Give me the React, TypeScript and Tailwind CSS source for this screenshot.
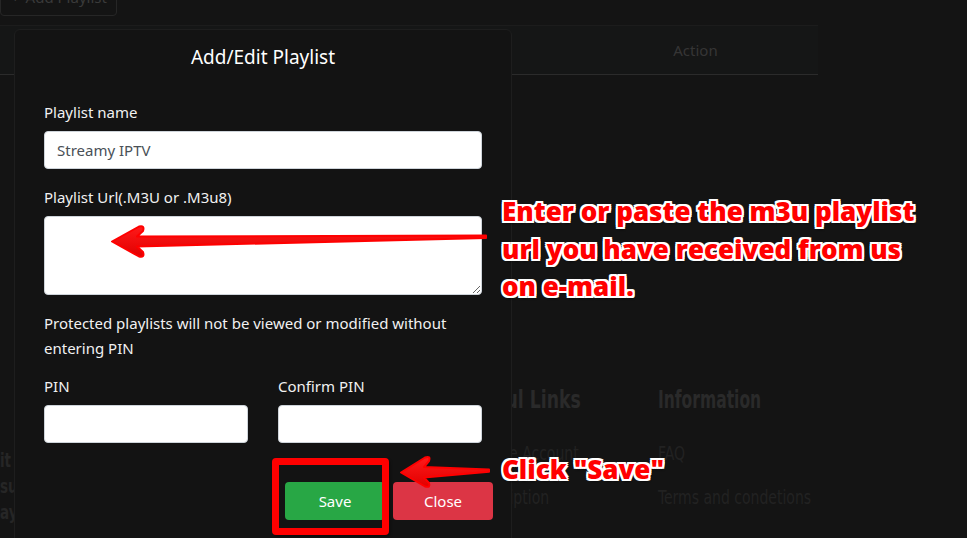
import React from 'react';

const uiFont = "font-['Noto_Sans',_'Open_Sans',_sans-serif]";

const Field = ({ label, children }: { label: string; children: React.ReactNode }) => (
  <div className="flex flex-col">
    <label className="h-[24px] leading-[24px] text-[15px] text-[#f1f1f1] mb-[7px]">{label}</label>
    {children}
  </div>
);

const inputCls =
  'h-[38px] w-full rounded-[4px] border border-[#ced4da] bg-white px-3 text-[15px] text-[#495057] outline-none';

const Background = () => (
  <div className="flex flex-col">
    <div className="h-[25px] overflow-hidden">
      <div className="mt-[-21px] flex h-[37px] w-[117px] items-center gap-[6px] whitespace-nowrap rounded-[4px] border border-[#262626] px-[10px] text-[15px] text-[#3a3a3a]">
        <span>+</span>
        <span>Add Playlist</span>
      </div>
    </div>
    <div className="flex h-[50px] w-[818px] border-t border-b border-t-[#1c1c1c] border-b-[#2b2b2b] bg-[#151616]">
      <div className="w-[573px]" />
      <div className="flex flex-1 items-center justify-center text-[15px] text-[#353535]">Action</div>
    </div>

    <div className="mt-[310px] flex font-['Liberation_Sans_Narrow',_'DejaVu_Sans_Condensed',_sans-serif]">
      <div className="flex w-[462px] flex-col pt-[62px] text-[20px] font-bold leading-[26px] text-[#262626]">
        <span className="origin-left scale-x-[0.75]">it</span>
        <span className="origin-left scale-x-[0.75]">su</span>
        <span className="origin-left scale-x-[0.75]">ay</span>
      </div>
      <div className="flex w-[196px] flex-col">
        <h4 className="h-[30px] origin-left scale-x-[0.8] text-[24px] font-bold leading-[30px] text-[#2a2a2a]">Useful Links</h4>
        <ul className="mt-[26px] flex flex-col gap-[20px] text-[19px] leading-[24px] text-[#222]">
          <li className="origin-left scale-x-[0.82]">Manage Account</li>
          <li className="origin-left scale-x-[0.82]">Subscription</li>
        </ul>
      </div>
      <div className="flex flex-col">
        <h4 className="h-[30px] origin-left scale-x-[0.72] text-[24px] font-bold leading-[30px] text-[#2a2a2a]">Information</h4>
        <ul className="mt-[26px] flex flex-col gap-[20px] text-[19px] leading-[24px] text-[#222]">
          <li className="origin-left scale-x-[0.82]">FAQ</li>
          <li className="origin-left scale-x-[0.82]">Terms and condetions</li>
        </ul>
      </div>
    </div>
  </div>
);

const Modal = () => (
  <div
    className={`absolute left-[14px] top-[29px] bottom-[-20px] w-[498px] rounded-t-[6px] border border-[#1e1e1e] bg-[#131313] ${uiFont}`}
  >
    <div className="flex h-[54px] items-center justify-center text-[19px] text-white">Add/Edit Playlist</div>
    <div className="flex flex-col px-[29px] pt-[16px]">
      <Field label="Playlist name">
        <input className={inputCls} defaultValue="Streamy IPTV" />
      </Field>
      <div className="mt-[16px]">
        <Field label="Playlist Url(.M3U or .M3u8)">
          <textarea className="h-[79px] w-full rounded-[4px] border border-[#ced4da] bg-white px-3 py-2 text-[15px] text-[#495057] outline-none" />
        </Field>
      </div>
      <p className="mt-[16px] text-[15px] leading-[25px] text-[#f1f1f1]">
        Protected playlists will not be viewed or modified without entering PIN
      </p>
      <div className="mt-[13px] grid grid-cols-2 gap-[30px]">
        <Field label="PIN">
          <input className={inputCls} type="password" />
        </Field>
        <Field label="Confirm PIN">
          <input className={inputCls} type="password" />
        </Field>
      </div>
    </div>
    <div className="mt-[39px] flex justify-end gap-[8px] pr-[18px]">
      <button className="h-[38px] w-[100px] rounded-[4px] bg-[#28a745] text-[15px] text-white">Save</button>
      <button className="h-[38px] w-[100px] rounded-[4px] bg-[#dc3545] text-[15px] text-white">Close</button>
    </div>
  </div>
);

const callout =
  "font-['Open_Sans',_'Noto_Sans',_sans-serif] font-extrabold text-[#ff0000] [text-shadow:2px_0_0_#fff,-2px_0_0_#fff,0_2px_0_#fff,0_-2px_0_#fff,2px_2px_0_#fff,-2px_-2px_0_#fff,2px_-2px_0_#fff,-2px_2px_0_#fff,1px_3px_2px_rgba(0,0,0,0.5)]";

const Annotations = () => (
  <>
    <svg className="pointer-events-none absolute inset-0" width="967" height="538" viewBox="0 0 967 538">
      <defs>
        <linearGradient id="arrowShade" x1="0" y1="0" x2="0" y2="1">
          <stop offset="0" stopColor="#ff1a1a" />
          <stop offset="1" stopColor="#e00000" />
        </linearGradient>
      </defs>
      <path
        d="M112,241.5 L139,226.5 Q145,225 143,231 L137,236.5 L486,235.5 L486,238 L137,246.5 L143,252 Q145,258 139,256.5 Z"
        fill="url(#arrowShade)"
        stroke="#f00"
        strokeWidth="2"
        strokeLinejoin="round"
      />
      <path
        d="M401,472.5 L425,457.5 Q431,455.5 429,461 L424,467 L489,469.5 L489,471.8 L424,477.5 L429,483 Q431,488 425,486.5 Z"
        fill="url(#arrowShade)"
        stroke="#f00"
        strokeWidth="2"
        strokeLinejoin="round"
      />
    </svg>
    <div className="absolute left-[272px] top-[458px] h-[77px] w-[117px] rounded-[4px] border-[7px] border-[#ff0000] shadow-[1px_2px_3px_rgba(0,0,0,0.4)]" />
    <div className={`absolute left-[502px] top-[193px] text-[26px] leading-[37.5px] ${callout}`}>
      <div>Enter or paste the m3u playlist</div>
      <div>url you have received from us</div>
      <div>on e-mail.</div>
    </div>
    <div className={`absolute left-[502px] top-[451px] text-[26px] leading-[37.5px] ${callout}`}>Click "Save"</div>
  </>
);

export default function App() {
  return (
    <div className={`relative h-[538px] w-[967px] overflow-hidden bg-[#141414] ${uiFont}`}>
      <Background />
      <Modal />
      <Annotations />
    </div>
  );
}
